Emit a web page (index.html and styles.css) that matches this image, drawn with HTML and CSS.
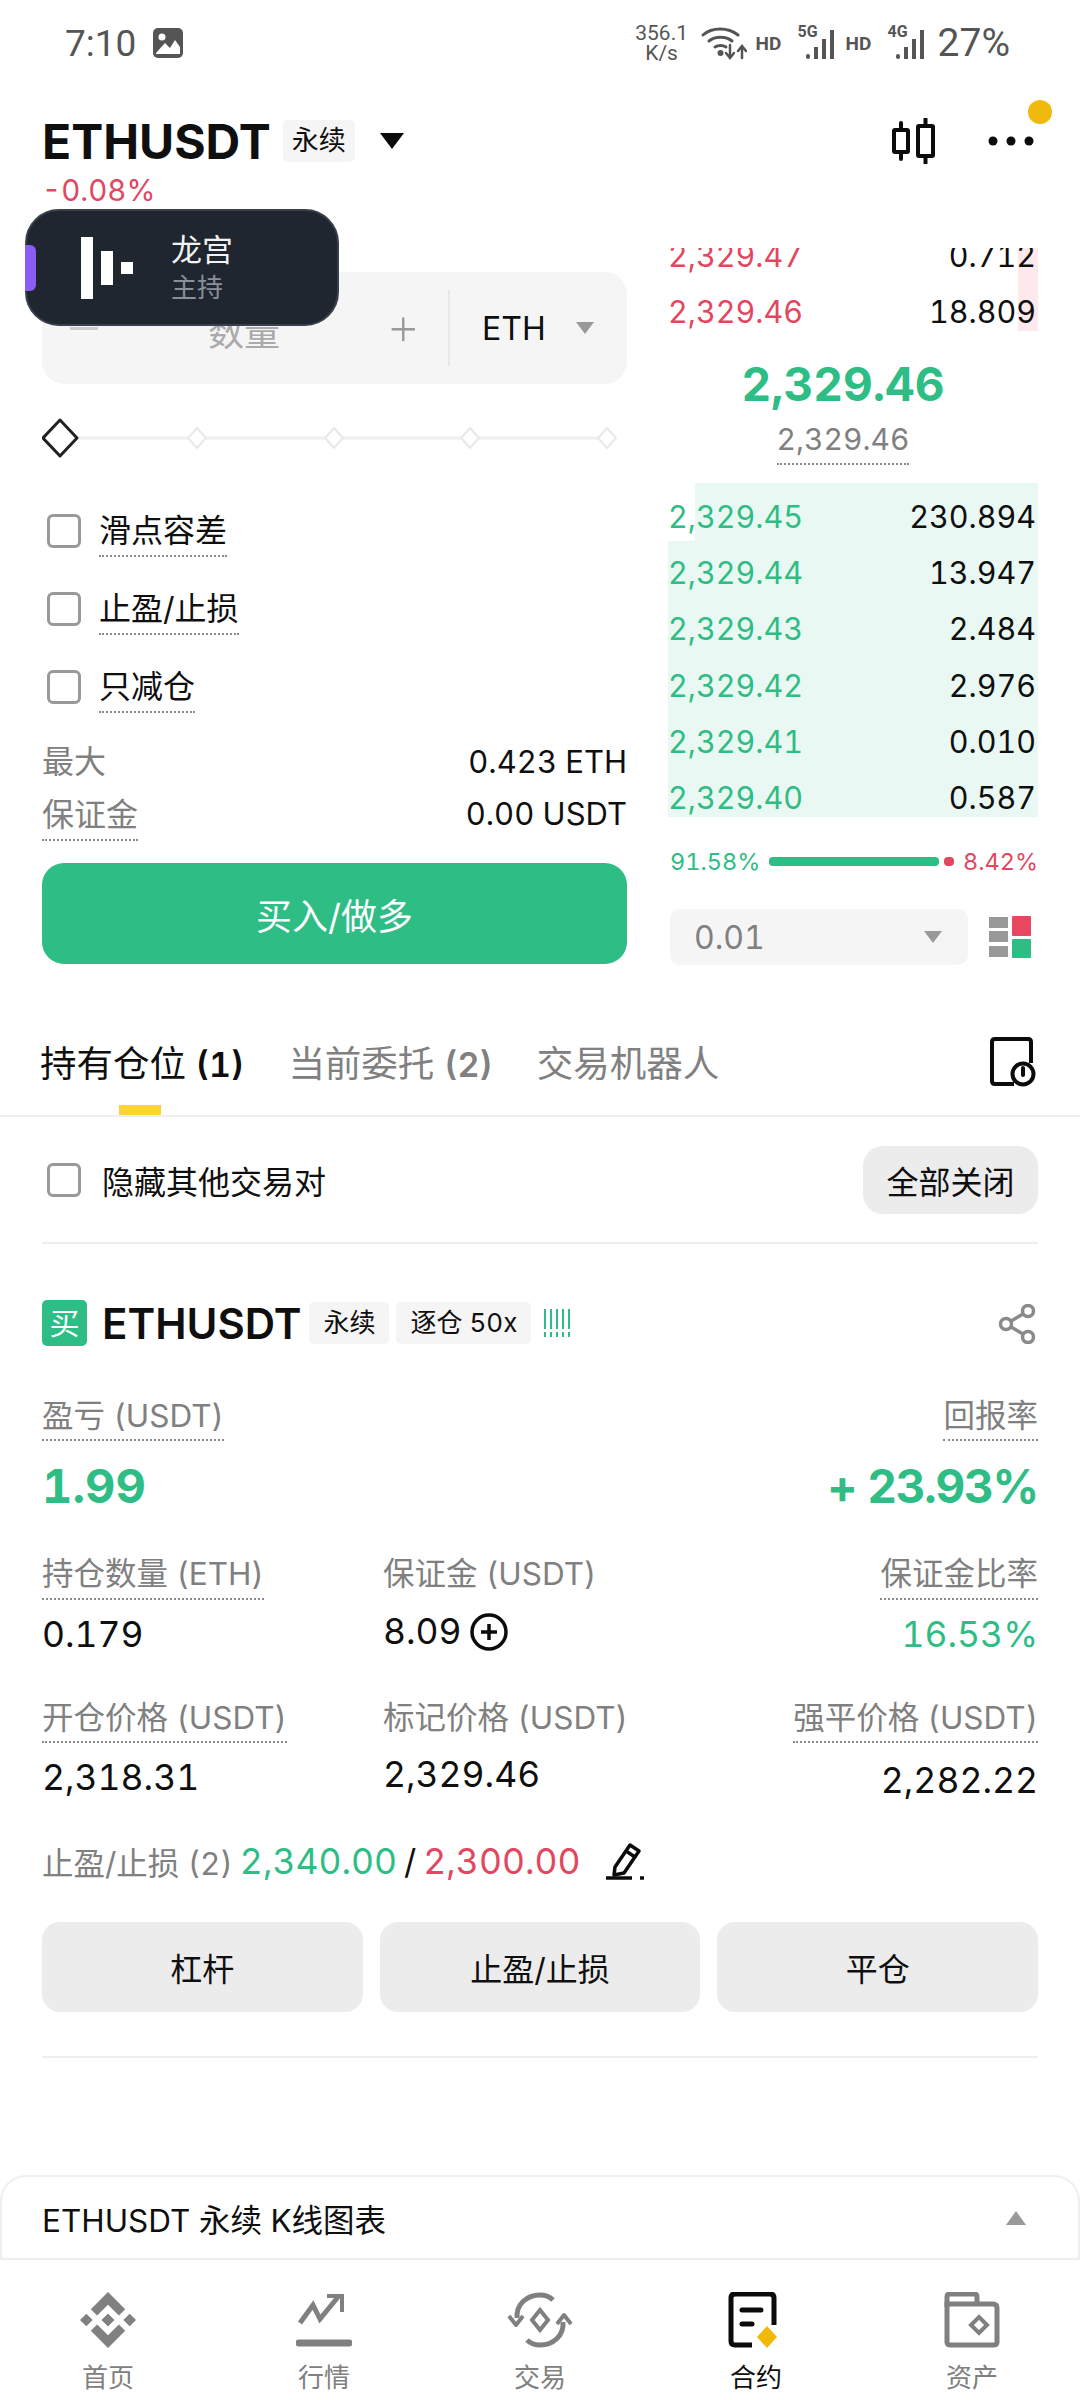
FILE: index.html
```html
<!DOCTYPE html>
<html lang="zh">
<head>
<meta charset="utf-8">
<title>ETHUSDT</title>
<link rel="stylesheet" href="styles.css">
</head>
<body>
<div class="page">
  <header class="status">
    <div class="status-left">
      <span class="clock">7:10</span>
      <svg class="st-img" width="32" height="32" viewBox="0 0 32 32"><rect x="1" y="1" width="30" height="30" rx="5" fill="#555"/><circle cx="10" cy="10" r="3.5" fill="#fff"/><path d="M4 26 L13 16 L18 21 L23 13 L28 20 V27 H4Z" fill="#fff"/></svg>
    </div>
    <div class="status-right">
      <span class="speed">356.1<br>K/s</span>
      <svg class="st-wifi" width="46" height="36" viewBox="0 0 46 36" fill="none" stroke="#555" stroke-width="3" stroke-linecap="round"><path d="M2 10 C11 2 27 2 37 10"/><path d="M8 16 C14 11 25 11 31 16"/><path d="M14 22 C17 20 22 20 25 22"/><circle cx="19.500" cy="28" r="1.500" fill="#555"/><path d="M29 20 V32 M25 28 L29 33 L33 28" stroke-width="2.500"/><path d="M41 33 V22 M37 26 L41 21 L45 26" stroke-width="2.500"/></svg>
      <span class="hd">HD</span>
      <span class="net"><span class="net-label">5G</span><svg width="30" height="30" viewBox="0 0 30 30" fill="#555"><rect x="0" y="25" width="4" height="5" rx="2"/><rect x="8" y="18" width="4" height="12"/><rect x="16" y="10" width="4" height="20"/><rect x="24" y="1" width="4" height="29"/></svg></span>
      <span class="hd">HD</span>
      <span class="net"><span class="net-label">4G</span><svg width="30" height="30" viewBox="0 0 30 30" fill="#555"><rect x="0" y="25" width="4" height="5" rx="2"/><rect x="8" y="18" width="4" height="12"/><rect x="16" y="10" width="4" height="20"/><rect x="24" y="1" width="4" height="29"/></svg></span>
      <span class="battery">27%</span>
    </div>
  </header>

  <section class="head">
    <div class="head-row">
      <div class="head-title">
        <span class="symbol">ETHUSDT</span>
        <span class="tag tag-top">永续</span>
        <svg class="tri-down" width="26" height="18" viewBox="0 0 26 18"><path d="M1 1 H25 L13 17Z" fill="#0b0b0b"/></svg>
      </div>
      <div class="head-actions">
        <svg width="46" height="46" viewBox="0 0 46 46" fill="none" stroke="#0b0b0b" stroke-width="4" stroke-linecap="round"><rect x="3" y="12" width="14" height="22" rx="1"/><path d="M10 5 V12 M10 34 V41"/><rect x="27" y="8" width="15" height="30" rx="1"/><path d="M34.500 1 V8 M34.500 38 V45"/></svg>
        <svg class="dots" width="46" height="12" viewBox="0 0 46 12" fill="#0b0b0b"><circle cx="5" cy="6" r="4.500"/><circle cx="23" cy="6" r="4.500"/><circle cx="41" cy="6" r="4.500"/></svg>
        <span class="notice-dot"></span>
      </div>
    </div>
    <div class="change">-0.08%</div>
  </section>

  <aside class="pill">
    <span class="pill-tab"></span>
    <span class="pill-logo"><i class="bar bar1"></i><i class="bar bar2"></i><i class="bar bar3"></i></span>
    <span class="pill-text"><b>龙宫</b><small>主持</small></span>
  </aside>

  <section class="trade">
    <div class="form">
      <div class="qty">
        <span class="qty-minus"></span>
        <span class="qty-label">数量</span>
        <span class="qty-plus">+</span>
        <span class="qty-sep"></span>
        <span class="qty-unit">ETH</span>
        <svg class="caret" width="18" height="12" viewBox="0 0 18 12"><path d="M0 0 H18 L9 12Z" fill="#999"/></svg>
      </div>
      <div class="slider">
        <svg width="585" height="40" viewBox="0 0 585 40" fill="none">
          <path d="M30 20 H565" stroke="#efefef" stroke-width="3"/>
          <path d="M155 10 L164 20 L155 30 L146 20Z M292 10 L301 20 L292 30 L283 20Z M428 10 L437 20 L428 30 L419 20Z M565 10 L574 20 L565 30 L556 20Z" fill="#fff" stroke="#e8e8e8" stroke-width="2"/>
          <path d="M18 2 L35 20 L18 38 L1 20Z" fill="#fff" stroke="#222" stroke-width="3" stroke-linejoin="round"/>
        </svg>
      </div>
      <div class="opts">
        <label class="opt"><span class="box"></span><span class="dotted">滑点容差</span></label>
        <label class="opt"><span class="box"></span><span class="dotted">止盈/止损</span></label>
        <label class="opt"><span class="box"></span><span class="dotted">只减仓</span></label>
      </div>
      <div class="kv"><span class="muted">最大</span><span>0.423 ETH</span></div>
      <div class="kv"><span class="muted dotted">保证金</span><span>0.00 USDT</span></div>
      <button class="buy">买入/做多</button>
    </div>

    <div class="book">
      <div class="asks">
        <div class="bk-row ask-clip"><span class="red">2,329.47</span><span>0.712</span></div>
        <div class="bk-row"><span class="red">2,329.46</span><span>18.809</span></div>
        <i class="ask-bar"></i>
      </div>
      <div class="mid">
        <div class="mid-price">2,329.46</div>
        <div class="mid-mark"><span class="dotted">2,329.46</span></div>
      </div>
      <div class="bids">
        <div class="bk-row"><span class="green">2,329.45</span><span>230.894</span></div>
        <div class="bk-row"><span class="green">2,329.44</span><span>13.947</span></div>
        <div class="bk-row"><span class="green">2,329.43</span><span>2.484</span></div>
        <div class="bk-row"><span class="green">2,329.42</span><span>2.976</span></div>
        <div class="bk-row"><span class="green">2,329.41</span><span>0.010</span></div>
        <div class="bk-row"><span class="green">2,329.40</span><span>0.587</span></div>
      </div>
      <div class="ratio">
        <span class="green">91.58%</span>
        <span class="ratio-bar"><i class="r-g"></i><i class="r-r"></i></span>
        <span class="red">8.42%</span>
      </div>
      <div class="depth">
        <div class="depth-sel"><span>0.01</span><svg width="18" height="12" viewBox="0 0 18 12"><path d="M0 0 H18 L9 12Z" fill="#999"/></svg></div>
        <svg width="42" height="42" viewBox="0 0 42 42"><g fill="#999"><rect x="0" y="1" width="19" height="11"/><rect x="0" y="15" width="19" height="11"/><rect x="0" y="30" width="19" height="11"/></g><rect x="23" y="0" width="19" height="20" rx="1" fill="#e8485f"/><rect x="23" y="23" width="19" height="19" rx="1" fill="#2ebd85"/></svg>
      </div>
    </div>
  </section>

  <nav class="tabs">
    <span class="tab tab-on">持有仓位 <b>(1)</b><i class="tab-line"></i></span>
    <span class="tab">当前委托 <b>(2)</b></span>
    <span class="tab">交易机器人</span>
    <svg class="tab-ico" width="46" height="50" viewBox="0 0 46 50" fill="none" stroke="#0b0b0b" stroke-width="4"><path d="M24 47 H5 Q2 47 2 44 V5 Q2 2 5 2 H38 Q41 2 41 5 V26"/><circle cx="33" cy="37" r="10.500"/><path d="M33 31 V38" stroke-linecap="round"/></svg>
  </nav>

  <section class="hide-row">
    <label class="opt"><span class="box"></span><span>隐藏其他交易对</span></label>
    <button class="close-all">全部关闭</button>
  </section>

  <section class="pos">
    <div class="pos-head">
      <span class="side">买</span>
      <span class="pos-symbol">ETHUSDT</span>
      <span class="tag">永续</span>
      <span class="tag">逐仓 50x</span>
      <span class="bars"><i></i><i></i><i></i><i></i><i></i></span>
      <svg class="share" width="40" height="40" viewBox="0 0 40 40" fill="none" stroke="#8a8a8a" stroke-width="3.500"><circle cx="30" cy="7" r="5.500"/><circle cx="8" cy="20" r="5.500"/><circle cx="30" cy="33" r="5.500"/><path d="M13 17 L25 10 M13 23 L25 30"/></svg>
    </div>

    <div class="pnl">
      <div><span class="muted dotted">盈亏 (USDT)</span><div class="pnl-val green">1.99</div></div>
      <div class="right"><span class="muted dotted">回报率</span><div class="pnl-val pnl-pct green">+ 23.93%</div></div>
    </div>

    <div class="stats">
      <div class="stat"><span class="muted dotted">持仓数量 (ETH)</span><div class="val">0.179</div></div>
      <div class="stat"><span class="muted dotted-none">保证金 (USDT)</span><div class="val val-up">8.09<svg width="38" height="38" viewBox="0 0 38 38" fill="none" stroke="#0b0b0b" stroke-width="3.500"><circle cx="19" cy="19" r="17"/><path d="M19 11 V27 M11 19 H27"/></svg></div></div>
      <div class="stat right"><span class="muted dotted">保证金比率</span><div class="val green">16.53%</div></div>
      <div class="stat"><span class="muted dotted">开仓价格 (USDT)</span><div class="val">2,318.31</div></div>
      <div class="stat"><span class="muted dotted-none">标记价格 (USDT)</span><div class="val val-up">2,329.46</div></div>
      <div class="stat right"><span class="muted dotted">强平价格 (USDT)</span><div class="val val-down">2,282.22</div></div>
    </div>

    <div class="tpsl">
      <span class="muted tpsl-l">止盈/止损 (2)</span>
      <span class="green">2,340.00</span>
      <span class="slash">/</span>
      <span class="red">2,300.00</span>
      <svg width="38" height="38" viewBox="0 0 38 38" fill="none" stroke="#0b0b0b" stroke-width="3.500"><path d="M9 25 L24 3 L33 9 L18 31 L8 33Z" stroke-linejoin="round"/><path d="M20 9 L29 15"/><path d="M0 36 H26"/><path d="M34 36 H38"/></svg>
    </div>

    <div class="actions">
      <button>杠杆</button>
      <button>止盈/止损</button>
      <button>平仓</button>
    </div>
  </section>

  <section class="kline">
    <span>ETHUSDT 永续 K线图表</span>
    <svg width="20" height="14" viewBox="0 0 20 14"><path d="M10 0 L20 14 H0Z" fill="#999"/></svg>
  </section>

  <footer class="nav">
    <div class="nav-item">
      <svg width="56" height="56" viewBox="0 0 126.61 126.61" fill="#808080"><path d="M38.73 53.2l24.59-24.58 24.6 24.6 14.3-14.31L63.32 0 24.42 38.9l14.31 14.3z"/><path d="M0 63.31l14.3-14.31 14.31 14.31-14.31 14.3z"/><path d="M38.73 73.41l24.59 24.59 24.6-24.6 14.31 14.29-38.9 38.91-38.91-38.88-.02-.02z"/><path d="M98 63.31l14.3-14.31 14.31 14.3-14.31 14.32z"/><path d="M77.83 63.3L63.32 48.78 52.59 59.51l-1.24 1.23-2.54 2.54 14.51 14.5 14.51-14.47z"/></svg>
      <span>首页</span>
    </div>
    <div class="nav-item">
      <svg width="56" height="56" viewBox="0 0 56 56" fill="none" stroke="#808080" stroke-width="5"><path d="M4 31 L17 13 L24 27 L42 5"/><path d="M31 4 H46 V20" stroke-width="4"/><path d="M3 51 H53" stroke-width="7" stroke-linecap="round"/></svg>
      <span>行情</span>
    </div>
    <div class="nav-item">
      <svg width="66" height="56" viewBox="0 0 66 56" fill="none" stroke="#808080" stroke-width="5"><path d="M10 26 C9 12 20 3 33 3 C39 3 43 5 46 8"/><path d="M56 30 C57 44 46 53 33 53 C27 53 23 51 20 48"/><path d="M2 24 L9 33 L16 24" stroke-linejoin="round" stroke-width="4"/><path d="M50 32 L57 23 L64 32" stroke-linejoin="round" stroke-width="4"/><path d="M33 18 L41 28 L33 38 L25 28Z" stroke-width="4"/></svg>
      <span>交易</span>
    </div>
    <div class="nav-item nav-on">
      <svg width="56" height="56" viewBox="0 0 56 56" fill="none"><path d="M24 53 H7 Q3 53 3 49 V6 Q3 2 7 2 H42 Q46 2 46 6 V33" stroke="#0b0b0b" stroke-width="5"/><path d="M14 18 H33 M14 32 H24" stroke="#0b0b0b" stroke-width="5" stroke-linecap="round"/><path d="M39 34 L49 45 L39 56 L29 45Z" fill="#f0b90b"/></svg>
      <span>合约</span>
    </div>
    <div class="nav-item">
      <svg width="56" height="56" viewBox="0 0 56 56" fill="none" stroke="#808080" stroke-width="5"><path d="M3 15 V5 Q3 2 6 2 H30 Q33 2 33 5 V14"/><path d="M3 12 H49 Q53 12 53 16 V50 Q53 53 49 53 H7 Q3 53 3 50Z"/><path d="M35 25 L43 33 L35 41 L27 33Z" stroke-width="4"/></svg>
      <span>资产</span>
    </div>
  </footer>
</div>
</body>
</html>
```

FILE: styles.css
```css
* { box-sizing: border-box; }
html, body { margin: 0; padding: 0; background: #fff; }
body { font-family: Inter, "Noto Sans CJK SC", "Noto Sans", sans-serif; color: #0f0f0f; font-variant-numeric: tabular-nums; }
i { display: block; font-style: normal; }
button { font: inherit; color: inherit; border: 0; padding: 0; }
.page { position: relative; width: 1080px; height: 2400px; overflow: hidden; background: #fff; display: flex; flex-direction: column; }

.green { color: #2ebd85; }
.red { color: #e2475f; }
.muted { color: #808080; }
.right { text-align: right; }
.dotted { display: inline-block; padding-bottom: 4px; border-bottom: 2px dotted #8a8a8a; line-height: 1.25; }
.dotted-none { display: inline-block; line-height: 1.25; padding-bottom: 6px; }

/* status bar */
.status { height: 86px; flex: none; display: flex; justify-content: space-between; align-items: center; padding: 0 70px 0 65px; font-family: Roboto, sans-serif; color: #555; }
.status-left { display: flex; align-items: center; gap: 16px; }
.clock { font-size: 37px; }
.status-right { display: flex; align-items: center; }
.speed { font-size: 21px; line-height: 20px; text-align: center; width: 54px; margin-left: 3px; }
.st-wifi { margin: 0 9px 0 12px; }
.hd { font-size: 19px; font-weight: 700; width: 30px; margin-right: 12px; }
.net { position: relative; width: 38px; height: 32px; margin-right: 10px; display: flex; justify-content: flex-end; align-items: flex-end; }
.net-label { position: absolute; left: 0; top: -3px; font-size: 16px; font-weight: 700; line-height: 16px; }
.battery { font-size: 39px; margin-left: 2px; }

/* header */
.head { height: 124px; flex: none; padding: 0 46px 0 42px; }
.head-row { height: 86px; padding-top: 24px; display: flex; justify-content: space-between; align-items: center; }
.head-title { display: flex; align-items: center; }
.symbol { font-size: 48px; font-weight: 700; }
.tag { background: #f5f5f5; border-radius: 5px; font-size: 26px; height: 42px; line-height: 42px; padding: 0 14px; }
.tag-top { margin-left: 12px; padding: 0 9px; font-size: 27px; }
.tri-down { margin-left: 24px; }
.head-actions { position: relative; display: flex; align-items: center; gap: 51px; }
.notice-dot { position: absolute; right: -18px; top: -18px; width: 24px; height: 24px; border-radius: 50%; background: #f0b90b; }
.change { font-size: 29.500px; line-height: 36px; color: #e2475f; }

/* floating pill */
.pill { position: absolute; z-index: 5; left: 25px; top: 209px; width: 314px; height: 117px; border-radius: 34px; background: #1f2630; border: 2px solid #39404b; display: flex; align-items: center; }
.pill-tab { position: absolute; left: -2px; top: 34px; width: 11px; height: 46px; background: #8b5cf6; border-radius: 0 6px 6px 0; }
.pill-logo { position: relative; margin-left: 54px; width: 52px; height: 62px; display: flex; gap: 8px; align-items: flex-start; }
.bar { width: 12px; background: #fff; }
.bar1 { height: 62px; }
.bar2 { height: 34px; margin-top: 14px; }
.bar3 { height: 12px; margin-top: 25px; }
.pill-text { margin-left: 38px; display: flex; flex-direction: column; }
.pill-text b { font-weight: 400; font-size: 31px; line-height: 40px; color: #f2f2f2; }
.pill-text small { font-size: 26px; line-height: 36px; color: #8a8f98; }

/* trade area */
.trade { height: 816px; flex: none; padding: 62px 42px 0 42px; display: flex; justify-content: space-between; }
.form { width: 585px; display: flex; flex-direction: column; }
.qty { height: 112px; background: #f5f5f5; border-radius: 22px; display: flex; align-items: center; position: relative; }
.qty-minus { width: 28px; height: 3px; background: #ccc; margin-left: 28px; }
.qty-label { margin-left: 110px; width: 72px; font-size: 36px; color: #aaa; margin-top: 4px; flex: none; white-space: nowrap; }
.qty-plus { margin-left: 109px; font-size: 50px; font-weight: 300; color: #999; line-height: 1; font-family: "Noto Sans", sans-serif; }
.qty-sep { position: absolute; left: 406px; top: 18px; bottom: 18px; width: 2px; background: #e8e8e8; }
.qty-unit { position: absolute; left: 440px; font-size: 32px; }
.caret { position: absolute; left: 534px; top: 50px; }
.slider { height: 40px; margin-top: 34px; }
.opts { margin-top: 46px; display: flex; flex-direction: column; gap: 19px; }
.opt { display: flex; align-items: center; gap: 18px; font-size: 32px; height: 59px; }
.opt .dotted { line-height: 42px; padding-bottom: 3px; }
.box { flex: none; width: 34px; height: 34px; border: 3px solid #999; border-radius: 6px; margin-left: 5px; }
.opts .box { margin-bottom: 6px; }
.kv { display: flex; justify-content: space-between; align-items: flex-start; font-size: 31px; line-height: 38px; margin-top: 14px; }
.kv + .kv { margin-top: 14px; }
.opts + .kv { margin-top: 24px; }
.kv .muted { font-size: 32px; }
.buy { margin-top: 22px; height: 101px; background: #2ebd85; color: #fff; border-radius: 22px; font-size: 36px; }

.book { width: 370px; font-size: 30.500px; }
.asks { position: relative; height: 83px; overflow: hidden; margin-top: -24px; }
.ask-bar { position: absolute; right: 0; top: 0; width: 20px; height: 100%; background: #fde8eb; }
.bk-row { position: relative; z-index: 1; height: 56.3px; display: flex; justify-content: space-between; align-items: center; padding: 0 2px 0 0; }
.ask-clip { margin-top: -21px; }
.mid { height: 152px; margin-right: 20px; text-align: center; }
.mid-price { font-size: 46px; font-weight: 700; color: #2ebd85; line-height: 56px; padding-top: 25px; height: 82px; }
.mid-mark { font-size: 30px; color: #808080; margin-top: 6px; }
.mid-mark .dotted { line-height: 40px; }
.bids { height: 334px; padding-top: 5px; background: linear-gradient(#fff, #fff) left top / 27px 58px no-repeat, #e9f8f2; }
.ratio { display: flex; align-items: center; justify-content: space-between; margin-top: 28px; padding-left: 2px; font-size: 23.500px; height: 32px; }
.ratio-bar { flex: 1; display: flex; align-items: center; gap: 5px; margin: 0 9px; }
.r-g { flex: 1; height: 9px; background: #2ebd85; border-radius: 4px; }
.r-r { width: 10px; height: 9px; background: #e2475f; border-radius: 4px; }
.depth { margin-top: 32px; display: flex; align-items: center; justify-content: space-between; padding: 0 7px 0 2px; }
.depth-sel { width: 298px; height: 56px; background: #f5f5f5; border-radius: 10px; padding: 0 26px 0 24px; display: flex; align-items: center; justify-content: space-between; color: #808080; font-size: 32px; }

/* tabs */
.tabs { height: 91px; flex: none; border-bottom: 2px solid #eee; padding: 0 40px; display: flex; align-items: flex-start; font-size: 36.500px; position: relative; }
.tab { position: relative; margin-right: 44px; color: #808080; line-height: 52px; margin-top: 12px; height: 77px; }
.tab b { font-weight: 600; font-size: 34px; }
.tab-on { color: #0f0f0f; }
.tab-line { position: absolute; left: 79px; bottom: 0; width: 42px; height: 10px; background: #fcd535; }
.tab-ico { position: absolute; right: 44px; top: 11px; }

/* hide row */
.hide-row { height: 127px; flex: none; margin: 0 42px; border-bottom: 2px solid #eee; display: flex; justify-content: space-between; align-items: center; font-size: 32px; }
.hide-row .opt { gap: 21px; }
.close-all { width: 175px; height: 68px; background: #ececec; border-radius: 20px; font-size: 32px; }

/* position */
.pos { flex: none; height: 931px; padding: 0 42px; }
.pos-head { display: flex; align-items: center; height: 46px; margin-top: 56px; position: relative; }
.side { width: 45px; height: 46px; border-radius: 5px; background: #2ebd85; color: #fff; font-size: 30px; line-height: 46px; text-align: center; }
.pos-symbol { font-size: 42px; font-weight: 600; margin: 0 8px 0 15px; }
.pos-head .tag { font-size: 26px; margin-right: 7px; }
.bars { display: flex; gap: 4px; margin-left: 6px; height: 28px; }
.bars i { width: 2px; height: 28px; background: repeating-linear-gradient(180deg, #2ebd85 0 20px, #fff 20px 23px, #2ebd85 23px 28px); }
.share { position: absolute; right: 0; top: 4px; }
.pnl { display: flex; justify-content: space-between; margin-top: 50px; font-size: 31.500px; }
.pnl-val { font-size: 47px; font-weight: 700; line-height: 56px; margin-top: 17px; }
.pnl-pct { letter-spacing: -1.200px; font-size: 46px; }
.stats { margin-top: 40px; display: grid; grid-template-columns: 341px 1fr auto; row-gap: 41px; font-size: 31.500px; }
.val { font-size: 35.500px; line-height: 44px; margin-top: 13px; color: #0f0f0f; display: flex; align-items: center; gap: 8px; }
.stat.right .val { justify-content: flex-end; }
.val.green { color: #2ebd85; }
.val-up { margin-top: 10px; }
.val-down { margin-top: 16px; }
.tpsl { display: flex; align-items: center; gap: 7px; font-size: 35.500px; margin-top: 32px; height: 52px; }
.tpsl-l { font-size: 31.500px; }
.slash { font-size: 34px; }
.tpsl svg { margin-left: 18px; }
.actions { margin-top: 35px; display: grid; grid-template-columns: repeat(3, 1fr); gap: 17px; padding-bottom: 44px; border-bottom: 2px solid #eee; }
.actions button { height: 90px; background: #ececec; border-radius: 18px; font-size: 32px; }

/* kline */
.kline { flex: none; height: 83px; border: 2px solid #efefef; border-bottom: 0; border-radius: 26px 26px 0 0; padding: 0 52px 0 40px; display: flex; justify-content: space-between; align-items: center; font-size: 31.500px; }

/* nav */
.nav { flex: 1; border-top: 2px solid #eee; display: grid; grid-template-columns: repeat(5, 1fr); }
.nav-item { display: flex; flex-direction: column; align-items: center; padding-top: 32px; color: #808080; font-size: 26px; }
.nav-item span { margin-top: 12px; line-height: 36px; }
.nav-on { color: #0f0f0f; }
```
